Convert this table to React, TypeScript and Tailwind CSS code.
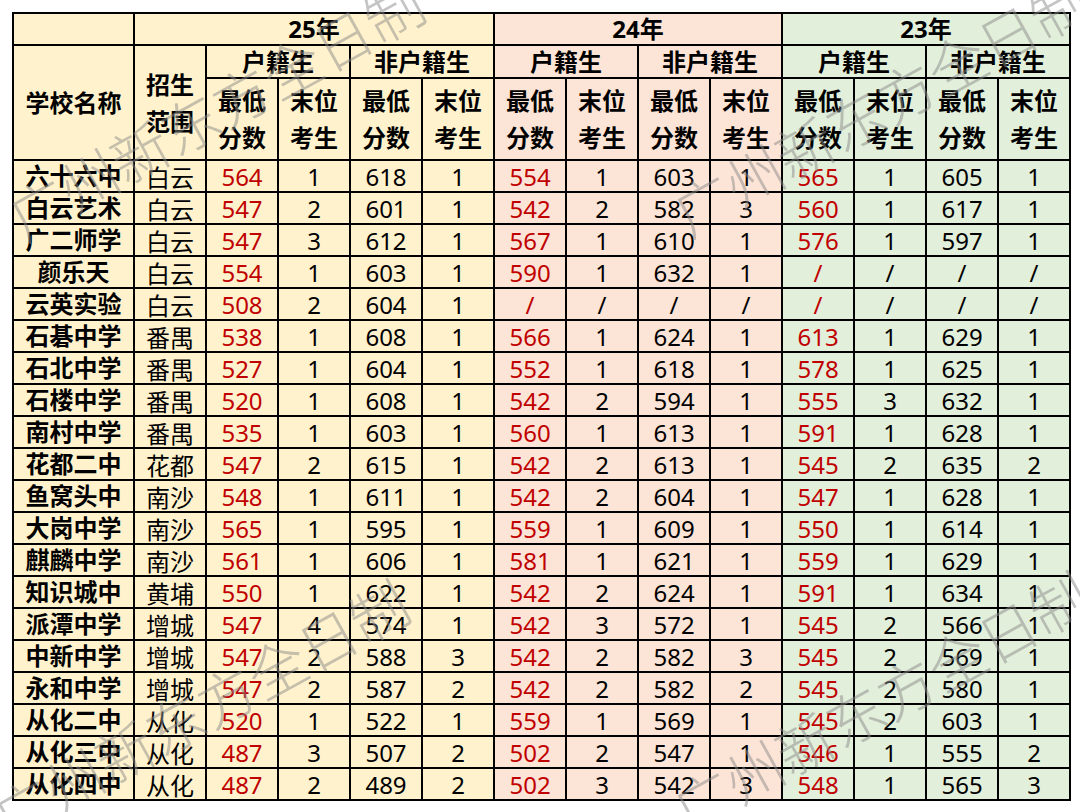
import React from 'react'

// 每年的三种底色：25 黄、24 粉、23 绿
const YEARS = [
  { label: '25年', bg: 'bg-[#fff2cc]' },
  { label: '24年', bg: 'bg-[#fce4d6]' },
  { label: '23年', bg: 'bg-[#e2efda]' },
]

const ROWS: string[][] = [
  ['六十六中', '白云', '564', '1', '618', '1', '554', '1', '603', '1', '565', '1', '605', '1'],
  ['白云艺术', '白云', '547', '2', '601', '1', '542', '2', '582', '3', '560', '1', '617', '1'],
  ['广二师学', '白云', '547', '3', '612', '1', '567', '1', '610', '1', '576', '1', '597', '1'],
  ['颜乐天', '白云', '554', '1', '603', '1', '590', '1', '632', '1', '/', '/', '/', '/'],
  ['云英实验', '白云', '508', '2', '604', '1', '/', '/', '/', '/', '/', '/', '/', '/'],
  ['石碁中学', '番禺', '538', '1', '608', '1', '566', '1', '624', '1', '613', '1', '629', '1'],
  ['石北中学', '番禺', '527', '1', '604', '1', '552', '1', '618', '1', '578', '1', '625', '1'],
  ['石楼中学', '番禺', '520', '1', '608', '1', '542', '2', '594', '1', '555', '3', '632', '1'],
  ['南村中学', '番禺', '535', '1', '603', '1', '560', '1', '613', '1', '591', '1', '628', '1'],
  ['花都二中', '花都', '547', '2', '615', '1', '542', '2', '613', '1', '545', '2', '635', '2'],
  ['鱼窝头中', '南沙', '548', '1', '611', '1', '542', '2', '604', '1', '547', '1', '628', '1'],
  ['大岗中学', '南沙', '565', '1', '595', '1', '559', '1', '609', '1', '550', '1', '614', '1'],
  ['麒麟中学', '南沙', '561', '1', '606', '1', '581', '1', '621', '1', '559', '1', '629', '1'],
  ['知识城中', '黄埔', '550', '1', '622', '1', '542', '2', '624', '1', '591', '1', '634', '1'],
  ['派潭中学', '增城', '547', '4', '574', '1', '542', '3', '572', '1', '545', '2', '566', '1'],
  ['中新中学', '增城', '547', '2', '588', '3', '542', '2', '582', '3', '545', '2', '569', '1'],
  ['永和中学', '增城', '547', '2', '587', '2', '542', '2', '582', '2', '545', '2', '580', '1'],
  ['从化二中', '从化', '520', '1', '522', '1', '559', '1', '569', '1', '545', '2', '603', '1'],
  ['从化三中', '从化', '487', '3', '507', '2', '502', '2', '547', '1', '546', '1', '555', '2'],
  ['从化四中', '从化', '487', '2', '489', '2', '502', '3', '542', '3', '548', '1', '565', '3'],
]

// 水印位置（中心点）
const MARKS = [
  { left: 'left-[215px]', top: 'top-[108px]' },
  { left: 'left-[880px]', top: 'top-[104px]' },
  { left: 'left-[200px]', top: 'top-[708px]' },
  { left: 'left-[880px]', top: 'top-[700px]' },
]

const cell = 'border-2 border-black text-center align-middle p-0'
const head = `${cell} font-bold text-[24px] text-black`

export default function App() {
  return (
    <div
      className="relative w-[1080px] h-[812px] bg-white overflow-hidden pl-[12px] pt-[12px]"
      style={{ fontFamily: '"Noto Sans", "Noto Sans CJK SC", sans-serif' }}
    >
      <table className="table-fixed border-collapse w-[1056px]">
        <colgroup>
          <col className="w-[121px]" />
          <col className="w-[72px]" />
          {Array.from({ length: 12 }).map((_, i) => (
            <col key={i} className="w-[72px]" />
          ))}
        </colgroup>
        <thead>
          <tr className="h-[32px]">
            <td className={`${head} bg-[#fff2cc] leading-[26px]`} />
            <td colSpan={5} className={`${head} bg-[#fff2cc] leading-[26px]`}>
              25年
            </td>
            <td colSpan={4} className={`${head} bg-[#fce4d6] leading-[26px]`}>
              24年
            </td>
            <td colSpan={4} className={`${head} bg-[#e2efda] leading-[26px]`}>
              23年
            </td>
          </tr>
          <tr className="h-[33px]">
            <td rowSpan={2} className={`${head} bg-[#fff2cc] leading-[37px]`}>
              学校名称
            </td>
            <td rowSpan={2} className={`${head} bg-[#fff2cc] leading-[37px]`}>
              招生
              <br />
              范围
            </td>
            {YEARS.map((y) => (
              <React.Fragment key={y.label}>
                <td colSpan={2} className={`${head} ${y.bg} leading-[27px]`}>
                  户籍生
                </td>
                <td colSpan={2} className={`${head} ${y.bg} leading-[27px]`}>
                  非户籍生
                </td>
              </React.Fragment>
            ))}
          </tr>
          <tr className="h-[82px]">
            {YEARS.map((y) =>
              [0, 1].map((k) => (
                <React.Fragment key={y.label + k}>
                  <td className={`${head} ${y.bg} leading-[37px]`}>
                    最低
                    <br />
                    分数
                  </td>
                  <td className={`${head} ${y.bg} leading-[37px]`}>
                    末位
                    <br />
                    考生
                  </td>
                </React.Fragment>
              )),
            )}
          </tr>
        </thead>
        <tbody>
          {ROWS.map((r) => (
            <tr key={r[0]} className="h-[32px]">
              <td className={`${cell} bg-[#fff2cc] font-bold text-[24px] leading-[28px] text-black`}>
                {r[0]}
              </td>
              <td className={`${cell} bg-[#fff2cc] text-[24px] leading-[28px] text-black`}>
                <span className="relative top-[2px]">{r[1]}</span>
              </td>
              {r.slice(2).map((v, i) => {
                const bg = YEARS[Math.floor(i / 4)].bg
                const red = i % 4 === 0
                return (
                  <td
                    key={i}
                    className={`${cell} ${bg} text-[24px] leading-[28px] ${red ? 'text-[#c00000]' : 'text-black'}`}
                  >
                    <span className="relative top-[1px]">{v}</span>
                  </td>
                )
              })}
            </tr>
          ))}
        </tbody>
      </table>

      {/* 水印 */}
      {MARKS.map((m, i) => (
        <div
          key={i}
          aria-hidden="true"
          className={`pointer-events-none select-none absolute ${m.left} ${m.top} -translate-x-1/2 -translate-y-1/2 -rotate-[29deg] whitespace-nowrap text-[58px] leading-none font-light text-[#8a8a8a]/50`}
          style={{ fontFamily: '"Noto Sans CJK SC", sans-serif' }}
        >
          广州新东方全日制
        </div>
      ))}
    </div>
  )
}
